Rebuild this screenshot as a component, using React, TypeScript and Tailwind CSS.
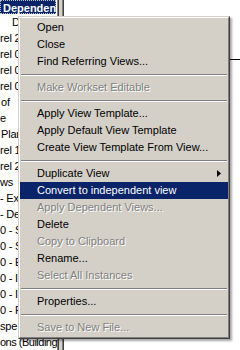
import React from "react";

type Item = { t: string; d?: boolean; hl?: boolean; sub?: boolean } | "sep";

const items: Item[] = [
  { t: "Open" },
  { t: "Close" },
  { t: "Find Referring Views..." },
  "sep",
  { t: "Make Workset Editable", d: true },
  "sep",
  { t: "Apply View Template..." },
  { t: "Apply Default View Template" },
  { t: "Create View Template From View..." },
  "sep",
  { t: "Duplicate View", sub: true },
  { t: "Convert to independent view", hl: true },
  { t: "Apply Dependent Views...", d: true },
  { t: "Delete" },
  { t: "Copy to Clipboard", d: true },
  { t: "Rename..." },
  { t: "Select All Instances", d: true },
  "sep",
  { t: "Properties..." },
  "sep",
  { t: "Save to New File...", d: true },
];

const rows: { t: string; x: number }[] = [
  { t: "De", x: 12 },
  { t: "rel 2", x: 0 },
  { t: "rel 0", x: 0 },
  { t: "rel 0", x: 0 },
  { t: "rel 0", x: 0 },
  { t: "of", x: 1 },
  { t: "e", x: 0 },
  { t: "Plan", x: 1 },
  { t: "rel 1", x: 0 },
  { t: "rel 2", x: 0 },
  { t: "ws", x: 0 },
  { t: "- Ex", x: 0 },
  { t: "- De", x: 0 },
  { t: "0 - S", x: 0 },
  { t: "0 - S", x: 0 },
  { t: "0 - E", x: 0 },
  { t: "0 - In", x: 0 },
  { t: "0 - In", x: 0 },
  { t: "0 - F", x: 0 },
  { t: "spe", x: 0 },
];

export default function App() {
  return (
    <div
      className="relative w-[240px] h-[350px] overflow-hidden bg-white flex text-[11px] text-black"
      style={{ fontFamily: '"Liberation Sans", Arial, sans-serif' }}
    >
      {/* tree panel */}
      <div className="w-[57px] shrink-0 overflow-hidden flex flex-col">
        <div className="h-[16px] w-[56px] bg-[#0a246a] text-white font-bold leading-[16px] pl-[3px] whitespace-nowrap overflow-hidden outline-1 outline-dotted outline-offset-[-1px] outline-[#c0c0c0]">
          Dependen
        </div>
        {rows.map((r, i) => (
          <div
            key={i}
            className="h-[16px] leading-[17px] whitespace-nowrap tracking-[-0.2px]"
            style={{ paddingLeft: r.x }}
          >
            {r.t}
          </div>
        ))}
        <div className="h-[16px] leading-[17px] whitespace-nowrap tracking-[-0.5px]">
          ons (Building
        </div>
      </div>
      {/* splitter */}
      <div className="w-[7px] shrink-0 flex">
        <div className="w-[1px] bg-[#808080]" />
        <div className="w-[1px] bg-[#404040]" />
        <div className="w-[3px] bg-[#d4d0c8]" />
        <div className="w-[1px] bg-[#808080]" />
        <div className="w-[1px] bg-[#404040]" />
      </div>
      {/* right area */}
      <div className="flex-1 flex flex-col">
        <div className="h-[59px]" />
        <div className="h-[1px] bg-black" />
      </div>

      {/* context menu */}
      <div className="absolute left-[18px] top-[16px] w-[212px] border border-t-[#d4d0c8] border-l-[#d4d0c8] border-r-[#404040] border-b-[#404040] bg-[#d4d0c8] shadow-[2px_2px_2px_rgba(0,0,0,0.35)]">
        <div className="border border-t-white border-l-white border-r-[#808080] border-b-[#808080] py-[1px]">
          {items.map((it, i) =>
            it === "sep" ? (
              <div key={i} className="h-[9px] pt-[4px] px-[1px]">
                <div className="h-[1px] bg-[#808080]" />
                <div className="h-[1px] bg-white" />
              </div>
            ) : (
              <div
                key={i}
                className={
                  "relative h-[17px] leading-[17px] pl-[17px] whitespace-nowrap " +
                  (it.hl ? "bg-[#0a246a] text-white" : it.d ? "text-[#808080] [text-shadow:1px_1px_0_#ffffff]" : "text-black")
                }
              >
                {it.t}
                {it.sub && (
                  <svg
                    className="absolute right-[7px] top-[5px]"
                    width="4"
                    height="7"
                    viewBox="0 0 4 7"
                  >
                    <path d="M0 0 L4 3.5 L0 7 Z" fill="#000" />
                  </svg>
                )}
              </div>
            )
          )}
        </div>
      </div>
    </div>
  );
}
